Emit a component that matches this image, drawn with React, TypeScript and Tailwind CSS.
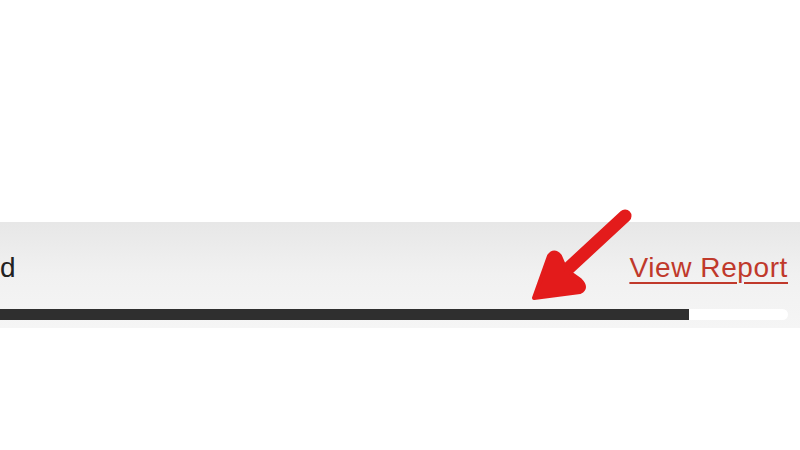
export default function App() {
  return (
    <div className="relative h-[450px] w-[800px] overflow-hidden bg-white font-['Liberation_Sans',Arial,sans-serif]">
      <div className="h-[222px]" />
      <section className="flex h-[106px] flex-col bg-gradient-to-b from-[#e7e7e7] via-[#f1f1f1] to-[#f5f5f5] pr-[12px]">
        <div className="flex h-[60px] items-end justify-between">
          <span className="text-[28px] leading-none text-[#222]">d</span>
          <a
            href="#"
            className="text-[28px] leading-none tracking-[0.6px] text-[#c0392b] underline decoration-[#c0392b] decoration-2 underline-offset-[5px]"
          >
            View Report
          </a>
        </div>
        <div className="mt-[27px] flex h-[11px]">
          <div className="h-full w-[689px] bg-[#2f2f2f]" />
          <div className="h-full flex-1 rounded-r-full bg-white" />
        </div>
      </section>

      <svg
        className="pointer-events-none absolute left-0 top-0"
        width="800"
        height="450"
        viewBox="0 0 800 450"
      >
        <line x1="625" y1="216" x2="558" y2="278" stroke="#e31b1b" strokeWidth="13" strokeLinecap="round" />
        <path
          d="M534 298 L549 256 Q554 249 560 256 L566 270 L580 280 Q588 288 580 292 Z"
          fill="#e31b1b"
          stroke="#e31b1b"
          strokeWidth="4"
          strokeLinejoin="round"
        />
      </svg>
    </div>
  );
}
